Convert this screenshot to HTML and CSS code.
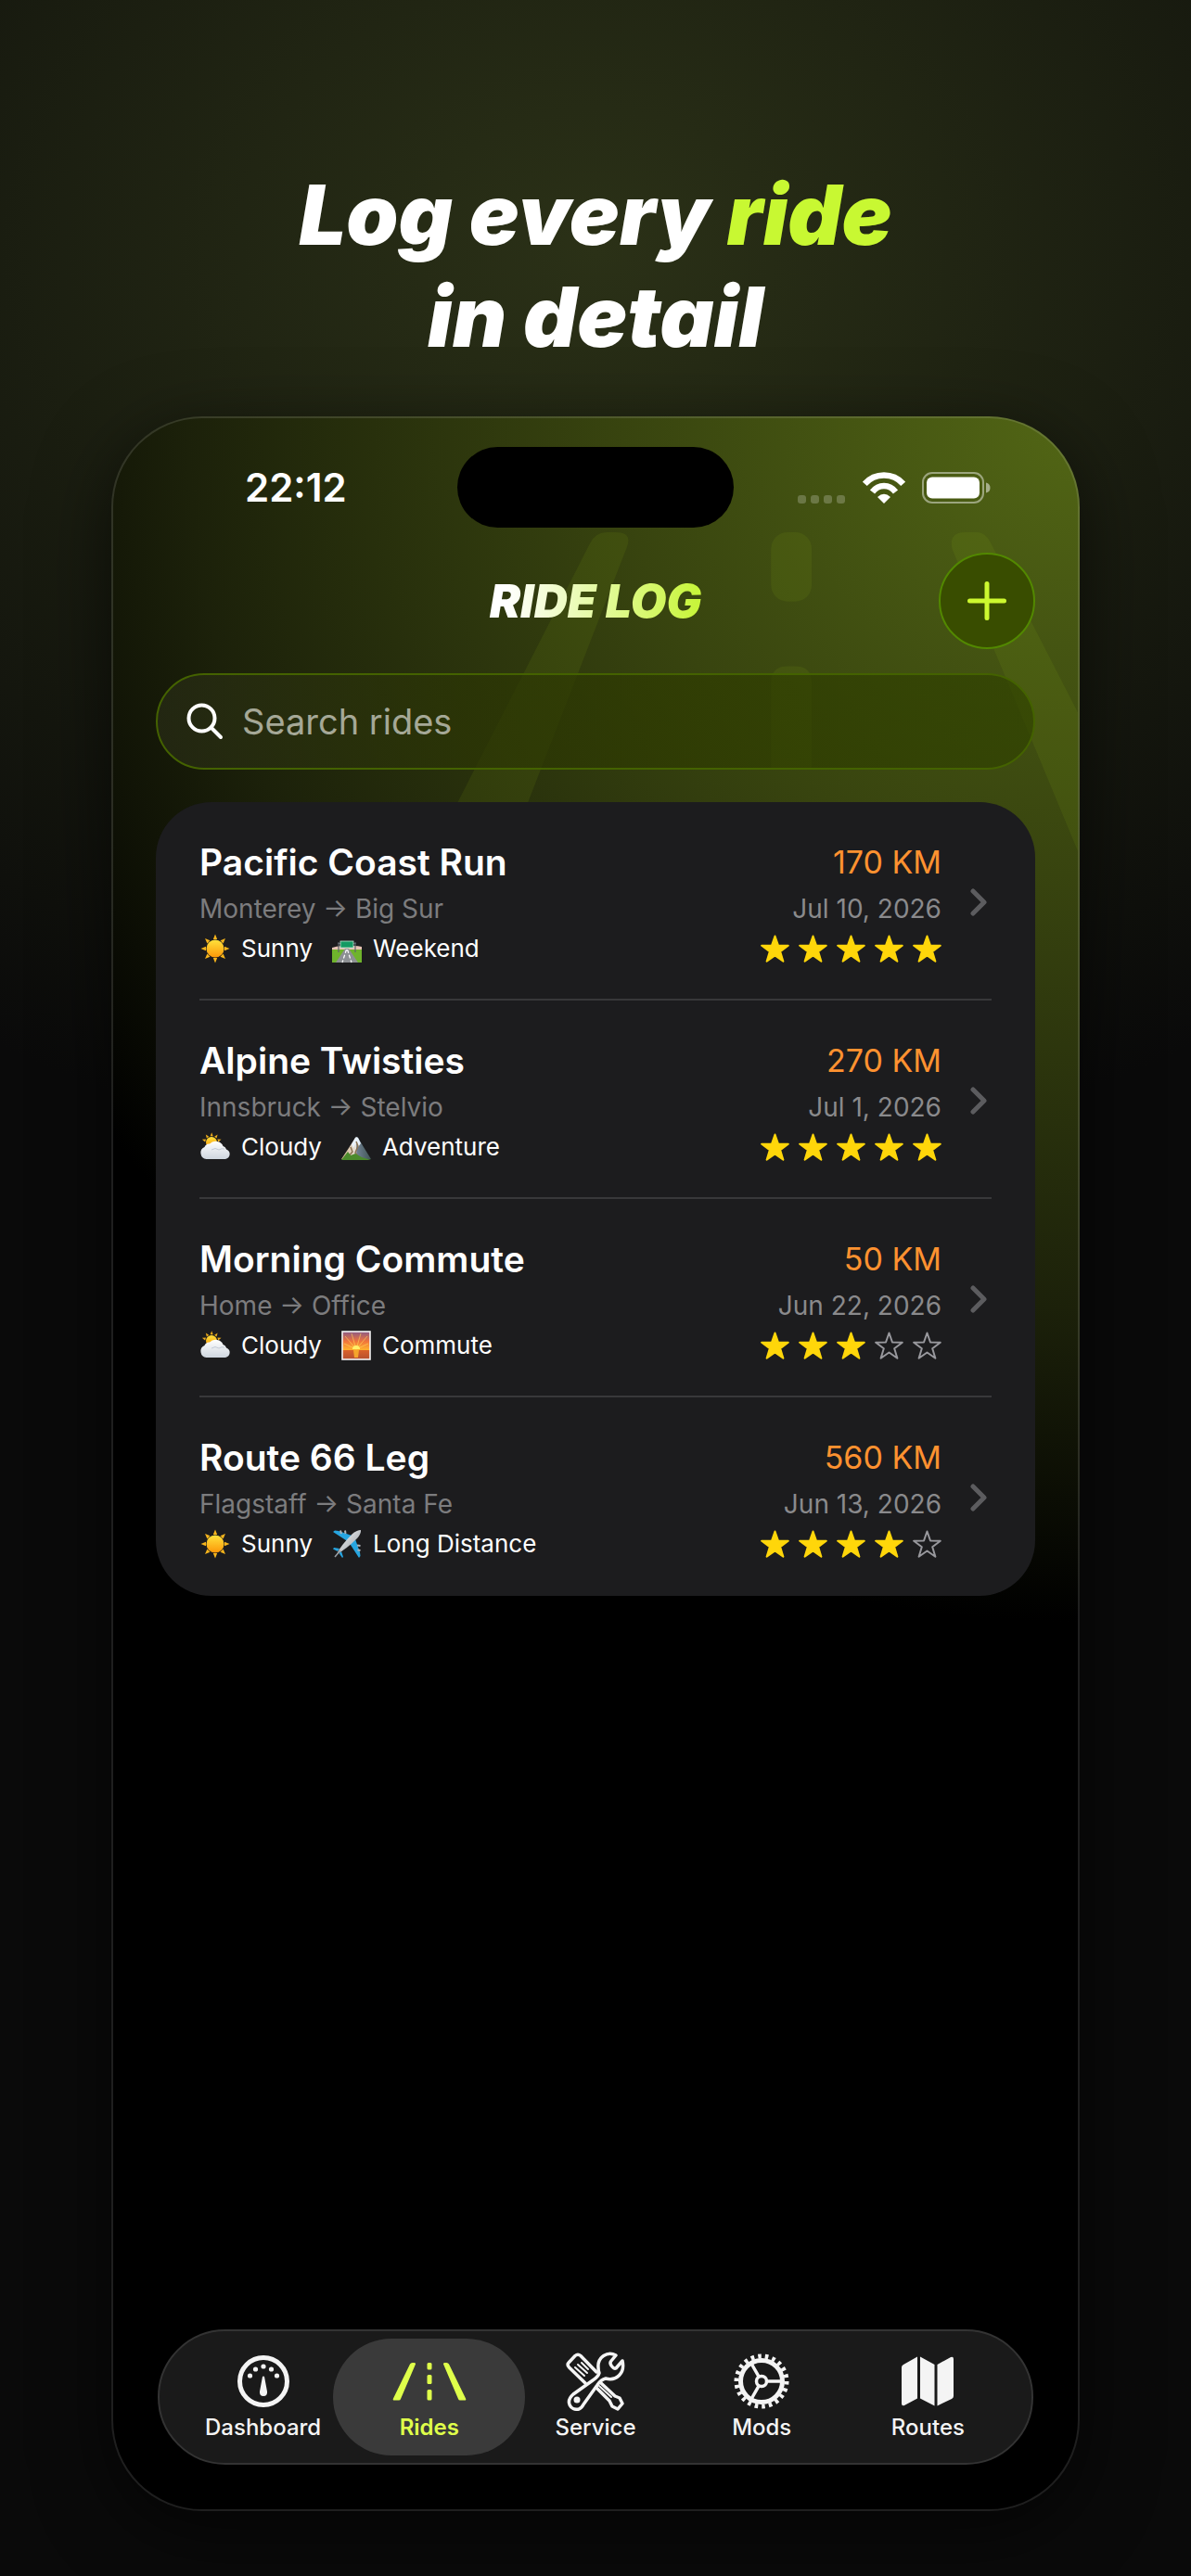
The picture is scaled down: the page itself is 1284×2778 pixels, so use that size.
FILE: index.html
```html
<!DOCTYPE html>
<html lang="en">
<head>
  <meta charset="UTF-8" />
  <meta name="viewport" content="width=device-width, initial-scale=1.0"/>
  <title>Ride Log</title>
  <link rel="stylesheet" href="styles.css">
</head>
<body>
  <!-- shared icons -->
  <svg class="sprite" aria-hidden="true">
    <defs>
      <linearGradient id="gSun" x1="0" y1="0" x2="0" y2="1"><stop offset="0" stop-color="#ffe23c"/><stop offset="1" stop-color="#fb9708"/></linearGradient>
      <linearGradient id="gCloud" x1="0" y1="0" x2="0" y2="1"><stop offset="0" stop-color="#ffffff"/><stop offset="1" stop-color="#cfd6df"/></linearGradient>
      <linearGradient id="gSky" x1="0" y1="0" x2="0" y2="1"><stop offset="0" stop-color="#8a5a86"/><stop offset=".35" stop-color="#f0743c"/><stop offset=".65" stop-color="#ffb02e"/><stop offset=".67" stop-color="#d9612a"/><stop offset="1" stop-color="#b5502f"/></linearGradient>
      <linearGradient id="gRock" x1="0" y1="0" x2="1" y2="0"><stop offset="0" stop-color="#cfae84"/><stop offset=".5" stop-color="#e9e4dc"/><stop offset=".52" stop-color="#6f7f92"/><stop offset="1" stop-color="#3f5552"/></linearGradient>
      <linearGradient id="gJet" x1="0" y1="0" x2="1" y2="1"><stop offset="0" stop-color="#ffffff"/><stop offset="1" stop-color="#8f959c"/></linearGradient>
      <path id="ray" d="M16 0.500L18.200 6H13.800Z"/>
    </defs>
    <symbol id="i-star" viewBox="0 0 31 31">
      <path d="M15.500 1.500L19 11.500L29.800 11.700L21.200 18.200L24.400 28.700L15.500 22.500L6.600 28.700L9.800 18.200L1.200 11.700L12 11.500Z" stroke-width="2" stroke-linejoin="round"/>
    </symbol>
    <symbol id="i-chevron" viewBox="0 0 18 30">
      <path d="M3 3L15 15L3 27" fill="none" stroke="currentColor" stroke-width="5" stroke-linecap="round" stroke-linejoin="round"/>
    </symbol>
    <symbol id="i-sun" viewBox="0 0 32 32">
      <g fill="#f7b51c">
        <use href="#ray"/><use href="#ray" transform="rotate(45 16 16)"/><use href="#ray" transform="rotate(90 16 16)"/><use href="#ray" transform="rotate(135 16 16)"/>
        <use href="#ray" transform="rotate(180 16 16)"/><use href="#ray" transform="rotate(225 16 16)"/><use href="#ray" transform="rotate(270 16 16)"/><use href="#ray" transform="rotate(315 16 16)"/>
      </g>
      <circle cx="16" cy="16" r="9.500" fill="url(#gSun)"/>
    </symbol>
    <symbol id="i-cloud" viewBox="0 0 32 32">
      <g fill="#e8a91c" transform="translate(1 0) scale(.7)">
        <use href="#ray"/><use href="#ray" transform="rotate(36 16 16)"/><use href="#ray" transform="rotate(72 16 16)"/><use href="#ray" transform="rotate(288 16 16)"/><use href="#ray" transform="rotate(324 16 16)"/>
      </g>
      <circle cx="12" cy="11" r="6" fill="url(#gSun)"/>
      <path d="M6.500 29A6.800 6.800 0 0 1 4.500 16A5.500 5.500 0 0 1 10 12.500A8.500 7.500 0 0 1 24.500 15A5 5 0 0 1 28 18.500A5.800 5.500 0 0 1 27 29Z" fill="url(#gCloud)"/>
      <path d="M12 19q4-3 8 0q3-2 6-1" fill="none" stroke="#c3cbd6" stroke-width="1"/>
    </symbol>
    <symbol id="i-highway" viewBox="0 0 32 32">
      <path d="M0 15q8-3 16-1q8-2 16 0v4H0Z" fill="#e6c3b4"/>
      <path d="M0 17H32V31H0Z" fill="#6fb32c"/>
      <path d="M14 16H18L28 31H4Z" fill="#8d9094"/>
      <path d="M15.500 17L11 31M16.500 17L21 31" stroke="#fff" stroke-width="1.200" stroke-dasharray="4 2"/>
      <path d="M7 9V20M25 9V20M6 10.500H26" stroke="#5d646b" stroke-width="1.200"/>
      <rect x="9" y="8" width="14" height="7" fill="#149a63" stroke="#bfe8d3" stroke-width=".8"/>
    </symbol>
    <symbol id="i-mountain" viewBox="0 0 32 32">
      <path d="M0 29L8 17L15 6q1.500-1.500 3 0L24 16L32 29Z" fill="url(#gRock)"/>
      <path d="M15 6q1.500-1.500 3 0L21 12L18 16L16 11L13 17L11 13Z" fill="#e9f2fb"/>
      <path d="M16 10L18 15L15 22L20 29M10 16L12 21L7 27" fill="none" stroke="#8b7352" stroke-width="1.500"/>
      <path d="M0 30L7 21L10 25L15 23L22 27L32 30Z" fill="#4b8a2c"/>
    </symbol>
    <symbol id="i-sunrise" viewBox="0 0 32 32">
      <rect x="1" y="1" width="30" height="30" fill="url(#gSky)" stroke="#f3f3f3" stroke-width="1.600"/>
      <path d="M16 20L3 14M16 20L4 6M16 20L11 3M16 20L21 3M16 20L28 6M16 20L29 14" stroke="#ffd65a" stroke-opacity=".6"/>
      <path d="M12 20a4 4 0 0 1 8 0Z" fill="#fff06a"/>
      <path d="M13 21H19L18 29H14Z" fill="#f5a52a"/>
    </symbol>
    <symbol id="i-plane" viewBox="0 0 32 32">
      <path d="M18 14L1 3L3 1.500L7 2L24 8ZM18 14L29 31L30.500 29L30 25L24 8ZM8 21L2 20L1 21.500L6 24ZM10 24L12 30L11 31L7.500 26Z" fill="#27a5e0"/>
      <path d="M5 27Q9 18 22 5Q27 1 31 1Q31.500 5 27 10Q15 22 5 27Z" fill="url(#gJet)"/>
      <path d="M3 30L9 23" stroke="#9aa0a6" stroke-width="1.500"/>
      <path d="M9 1.500L10 5M14 1.500L14.500 5M30.500 18L27 17.500M30.500 23L27.500 22.500" stroke="#aeb4ba" stroke-width="2"/>
    </symbol>
  </svg>

  <h1 class="headline">Log every <span>ride</span><br>in detail</h1>

  <main class="phone">
    <svg class="road" viewBox="0 0 1044 420" preserveAspectRatio="xMaxYMin meet" aria-hidden="true">
      <path d="M534 0H544Q562 0 556 16L446 300H369L516 12Q522 0 534 0Z"/>
      <rect x="712" y="0" width="44" height="75" rx="18"/>
      <path d="M730 145H738Q756 145 756 163V255H712V163Q712 145 730 145Z"/>
      <path d="M922 0H935Q944 0 950 12L1044 195V345L908 18Q904 0 922 0Z"/>
    </svg>

    <div class="status-bar">
      <time>22:12</time>
      <div class="island"></div>
      <div class="status-icons">
        <svg width="52" height="34" viewBox="0 0 52 34" fill="#fff" fill-opacity=".22"><rect y="25" width="9" height="9" rx="3"/><rect x="14" y="25" width="9" height="9" rx="3"/><rect x="28" y="25" width="9" height="9" rx="3"/><rect x="42" y="25" width="9" height="9" rx="3"/></svg>
        <svg width="46" height="34" viewBox="0 0 46 34" fill="none" stroke="#fff" stroke-width="6.500"><path d="M2.300 12.800Q10.500 3.500 23 3.500T43.700 12.800"/><path d="M10.500 21.500Q15.500 15 23 15T35.500 21.500"/><path d="M23 34L16 27Q23 20.500 30 27Z" fill="#fff" stroke="none"/></svg>
        <svg width="74" height="34" viewBox="0 0 74 34"><rect x="1" y="1" width="65" height="32" rx="10" fill="none" stroke="#fff" stroke-opacity=".45" stroke-width="2"/><rect x="5" y="5.500" width="57" height="23" rx="6" fill="#fff"/><path d="M69 11.500Q73.500 12.500 73.500 17T69 22.500Z" fill="#fff" fill-opacity=".5"/></svg>
      </div>
    </div>

    <header class="app-header">
      <h2>RIDE LOG</h2>
      <button class="add-btn" type="button" aria-label="Add ride">
        <svg width="42" height="42" viewBox="0 0 42 42"><path d="M21 2.500V39.500M2.500 21H39.500" stroke="currentColor" stroke-width="5" stroke-linecap="round"/></svg>
      </button>
    </header>

    <label class="search">
      <svg width="40" height="40" viewBox="0 0 40 40" fill="none" stroke="#fff" stroke-width="4" stroke-linecap="round"><circle cx="16.500" cy="16.500" r="14"/><path d="M27 27L37 37"/></svg>
      <input type="search" placeholder="Search rides" aria-label="Search rides">
    </label>

    <ul class="rides">
      <li class="ride">
        <div class="info">
          <h3>Pacific Coast Run</h3>
          <p class="route">Monterey → Big Sur</p>
          <div class="tags">
            <span><svg><use href="#i-sun"/></svg>Sunny</span>
            <span><svg><use href="#i-highway"/></svg>Weekend</span>
          </div>
        </div>
        <div class="stats">
          <strong>170 KM</strong>
          <p class="date">Jul 10, 2026</p>
          <div class="stars" role="img" aria-label="5 of 5 stars">
            <svg><use href="#i-star"/></svg><svg><use href="#i-star"/></svg><svg><use href="#i-star"/></svg><svg><use href="#i-star"/></svg><svg><use href="#i-star"/></svg>
          </div>
        </div>
        <svg class="chevron"><use href="#i-chevron"/></svg>
      </li>
      <li class="ride">
        <div class="info">
          <h3>Alpine Twisties</h3>
          <p class="route">Innsbruck → Stelvio</p>
          <div class="tags">
            <span><svg><use href="#i-cloud"/></svg>Cloudy</span>
            <span><svg><use href="#i-mountain"/></svg>Adventure</span>
          </div>
        </div>
        <div class="stats">
          <strong>270 KM</strong>
          <p class="date">Jul 1, 2026</p>
          <div class="stars" role="img" aria-label="5 of 5 stars">
            <svg><use href="#i-star"/></svg><svg><use href="#i-star"/></svg><svg><use href="#i-star"/></svg><svg><use href="#i-star"/></svg><svg><use href="#i-star"/></svg>
          </div>
        </div>
        <svg class="chevron"><use href="#i-chevron"/></svg>
      </li>
      <li class="ride">
        <div class="info">
          <h3>Morning Commute</h3>
          <p class="route">Home → Office</p>
          <div class="tags">
            <span><svg><use href="#i-cloud"/></svg>Cloudy</span>
            <span><svg><use href="#i-sunrise"/></svg>Commute</span>
          </div>
        </div>
        <div class="stats">
          <strong>50 KM</strong>
          <p class="date">Jun 22, 2026</p>
          <div class="stars" role="img" aria-label="3 of 5 stars">
            <svg><use href="#i-star"/></svg><svg><use href="#i-star"/></svg><svg><use href="#i-star"/></svg><svg class="empty"><use href="#i-star"/></svg><svg class="empty"><use href="#i-star"/></svg>
          </div>
        </div>
        <svg class="chevron"><use href="#i-chevron"/></svg>
      </li>
      <li class="ride">
        <div class="info">
          <h3>Route 66 Leg</h3>
          <p class="route">Flagstaff → Santa Fe</p>
          <div class="tags">
            <span><svg><use href="#i-sun"/></svg>Sunny</span>
            <span><svg><use href="#i-plane"/></svg>Long Distance</span>
          </div>
        </div>
        <div class="stats">
          <strong>560 KM</strong>
          <p class="date">Jun 13, 2026</p>
          <div class="stars" role="img" aria-label="4 of 5 stars">
            <svg><use href="#i-star"/></svg><svg><use href="#i-star"/></svg><svg><use href="#i-star"/></svg><svg><use href="#i-star"/></svg><svg class="empty"><use href="#i-star"/></svg>
          </div>
        </div>
        <svg class="chevron"><use href="#i-chevron"/></svg>
      </li>
    </ul>

    <nav class="tab-bar">
      <a href="#dashboard">
        <svg width="64" height="64" viewBox="0 0 64 64" fill="currentColor"><circle cx="32" cy="32" r="25.500" fill="none" stroke="currentColor" stroke-width="5"/><circle cx="17.500" cy="26" r="2.600"/><circle cx="23.500" cy="19" r="2.600"/><circle cx="32" cy="16" r="2.600"/><circle cx="40.500" cy="19" r="2.600"/><circle cx="46.500" cy="26" r="2.600"/><path d="M31 27Q32 26 33 27L36 43Q36.500 48 32 48T28 43Z"/></svg>
        Dashboard
      </a>
      <a href="#rides" class="active">
        <svg width="80" height="64" viewBox="0 0 80 64" fill="currentColor"><path d="M21.500 12H23.500Q25.500 12 25 13.500L9 51Q8.500 52.500 7 52.500H2Q0 52.500 1 50.500L19 13.500Q20 12 21.500 12ZM58.500 12H56.500Q54.500 12 55 13.500L71 51Q71.500 52.500 73 52.500H78Q80 52.500 79 50.500L61 13.500Q60 12 58.500 12Z"/><rect x="37.500" y="12" width="5" height="7.500" rx="1.500"/><rect x="37.500" y="25" width="5" height="10" rx="1.500"/><rect x="37.500" y="41" width="5" height="11.500" rx="1.500"/></svg>
        Rides
      </a>
      <a href="#service">
        <svg width="64" height="64" viewBox="0 0 64 64" fill="none" stroke="currentColor" stroke-width="3.500" stroke-linejoin="round" stroke-linecap="round"><path d="M21 34L3.500 17Q1 14 3 12L10 4.500Q13 2 16 4.500L33 22"/><path d="M10 17L20 26M13 14L23 23M17 12L24 19" stroke-width="2"/><path d="M38 34L53 48L58 50L61 56L56 62L50 59L47 53L33 39"/><path d="M36 37L49 49" stroke-width="2"/><path d="M54 4C45 -1 34 6 35 17Q35 21 36 23Q35 27 29 31L8 46C-1 54 5 64 14 62Q17 61 19 57L34 36Q38 30 43 29C55 32 64 23 61 10L54 18Q52 19 49 15Q47 12 49 10Z"/><circle cx="12" cy="52" r="3.500" fill="currentColor" stroke="none"/></svg>
        Service
      </a>
      <a href="#mods">
        <svg width="64" height="64" viewBox="0 0 64 64" fill="none" stroke="currentColor"><circle cx="32" cy="32" r="22.500" stroke-width="5"/><circle cx="32" cy="32" r="27" stroke-width="5" stroke-dasharray="3.600 4.110" pathLength="169.600"/><circle cx="32" cy="32" r="5.500" stroke-width="3.500"/><path d="M38 32H55M29 26.800L20.500 12M29 37.200L20.500 52" stroke-width="3.500"/></svg>
        Mods
      </a>
      <a href="#routes">
        <svg width="64" height="64" viewBox="0 0 64 64" fill="currentColor"><path d="M4 17Q4 15 6 14L21 5.500V50.500L7 58Q4 59 4 56ZM24 5.500L39.500 14V58.500L24 50.500ZM42.500 14L57 6Q60 5 60 8V48Q60 50 58 51L42.500 58.500Z"/></svg>
        Routes
      </a>
    </nav>
  </main>
</body>
</html>
```

FILE: styles.css
```css
* {
  box-sizing: border-box;
}

body {
  font-family: 'Inter', system-ui, -apple-system, sans-serif;
  background: #0a0a0a radial-gradient(1250px 1000px at 50% 270px, #2b3117, #0a0a0a) no-repeat;
  color: #fff;
  margin: 0;
  min-height: 100vh;
  padding: 177px 120px 70px;
  display: flex;
  flex-direction: column;
}

h1, h2, h3, p, ul {
  margin: 0;
  padding: 0;
}

.sprite {
  position: absolute;
  width: 0;
  height: 0;
}

.headline {
  font-size: 90px;
  line-height: 110px;
  font-weight: 900;
  font-style: italic;
  text-align: center;
  margin-bottom: 52px;
}

.headline span {
  color: #c8f832;
}

.phone {
  position: relative;
  flex: 1;
  display: flex;
  flex-direction: column;
  padding: 31px 46px 48px;
  border: 2px solid rgba(255, 255, 255, 0.12);
  border-radius: 98px;
  background: #000 radial-gradient(circle 1300px at 100% 0, #526615, #38440f 38%, #1c210a 74%, #000) border-box no-repeat;
  box-shadow: 0 20px 80px rgba(0, 0, 0, 0.6);
  overflow: hidden;
}

.road {
  position: absolute;
  top: 123px;
  right: 0;
  width: 100%;
  fill: rgba(160, 200, 20, 0.09);
}

.status-bar,
.app-header,
.search,
.rides,
.tab-bar {
  position: relative;
}

.status-bar {
  display: grid;
  grid-template-columns: 1fr 298px 1fr;
  align-items: center;
}

.status-bar time {
  font-size: 42px;
  font-weight: 600;
  padding-left: 96px;
}

.island {
  height: 87px;
  border-radius: 44px;
  background: #000;
}

.status-icons {
  display: flex;
  justify-content: flex-end;
  gap: 18px;
  padding-right: 48px;
}

.app-header {
  display: grid;
  grid-template-columns: 104px 1fr 104px;
  align-items: center;
  margin: 27px 0 26px;
}

.app-header h2 {
  grid-column: 2;
  justify-self: center;
  padding: 0 6px;
  font-size: 50px;
  line-height: 60px;
  font-weight: 900;
  font-style: italic;
  background: linear-gradient(90deg, #fff 10%, #c8f53c 95%);
  -webkit-background-clip: text;
  background-clip: text;
  color: transparent;
}

.add-btn {
  display: flex;
  align-items: center;
  justify-content: center;
  width: 104px;
  height: 104px;
  padding: 0;
  border: 2px solid #528800;
  border-radius: 50%;
  background: #394d00;
  color: #cdf82f;
  cursor: pointer;
}

.search {
  display: flex;
  align-items: center;
  gap: 20px;
  height: 104px;
  padding: 0 31px;
  margin-bottom: 35px;
  border: 2px solid #446200;
  border-radius: 52px;
  background: linear-gradient(90deg, rgba(40, 44, 22, 0.7), rgba(43, 53, 4, 0.7) 35%, rgba(46, 59, 0, 0.7) 60%, rgba(48, 66, 0, 0.7));
}

.search input {
  flex: 1;
  min-width: 0;
  padding: 0;
  border: none;
  outline: none;
  background: none;
  color: #fff;
  font-family: inherit;
  font-size: 38px;
}

.search input::placeholder {
  color: #a5a897;
}

.rides {
  list-style: none;
  background: #1c1c1e;
  border-radius: 60px;
  padding: 0 47px;
}

.ride {
  display: flex;
  align-items: center;
  padding: 40px 5px 36px 0;
  border-bottom: 2px solid #38383a;
}

.ride:last-child {
  border-bottom-color: transparent;
}

.info {
  flex: 1;
}

.ride h3 {
  font-size: 39px;
  line-height: 50px;
  font-weight: 600;
}

.route,
.date {
  font-size: 28px;
  line-height: 50px;
  color: #8a8a8c;
}

.route {
  color: #7c7c7e;
}

.tags {
  display: flex;
  gap: 20px;
  font-size: 26px;
  line-height: 36px;
}

.tags span {
  display: flex;
  align-items: center;
  gap: 11px;
}

.tags svg {
  width: 34px;
  height: 32px;
}

.stats {
  text-align: right;
}

.stats strong {
  display: block;
  font-size: 34px;
  line-height: 50px;
  font-weight: 400;
  color: #ff9230;
}

.stars {
  display: flex;
  justify-content: flex-end;
  align-items: center;
  gap: 10px;
  height: 36px;
}

.stars svg {
  width: 31px;
  height: 31px;
  fill: #ffd60a;
  stroke: #ffd60a;
}

.stars .empty {
  fill: none;
  stroke: #98989d;
}

.chevron {
  width: 18px;
  height: 30px;
  margin-left: 31px;
  color: #5c5c5f;
}

.tab-bar {
  display: flex;
  margin: auto 2px 0;
  padding: 8px 22px;
  border: 2px solid #333;
  border-radius: 73px;
  background: #1a1a1a;
}

.tab-bar a {
  position: relative;
  flex: 1;
  display: flex;
  flex-direction: column;
  align-items: center;
  height: 126px;
  padding-top: 14px;
  color: #f4f4f4;
  font-size: 24px;
  line-height: 36px;
  font-weight: 500;
  text-decoration: none;
}

.tab-bar .active {
  color: #dfff4a;
  font-weight: 600;
  z-index: 0;
}

/* the highlight is wider than its tab */
.tab-bar .active::before {
  content: '';
  position: absolute;
  inset: 0 -14px;
  z-index: -1;
  border-radius: 63px;
  background: #3a3a3a;
}
```
